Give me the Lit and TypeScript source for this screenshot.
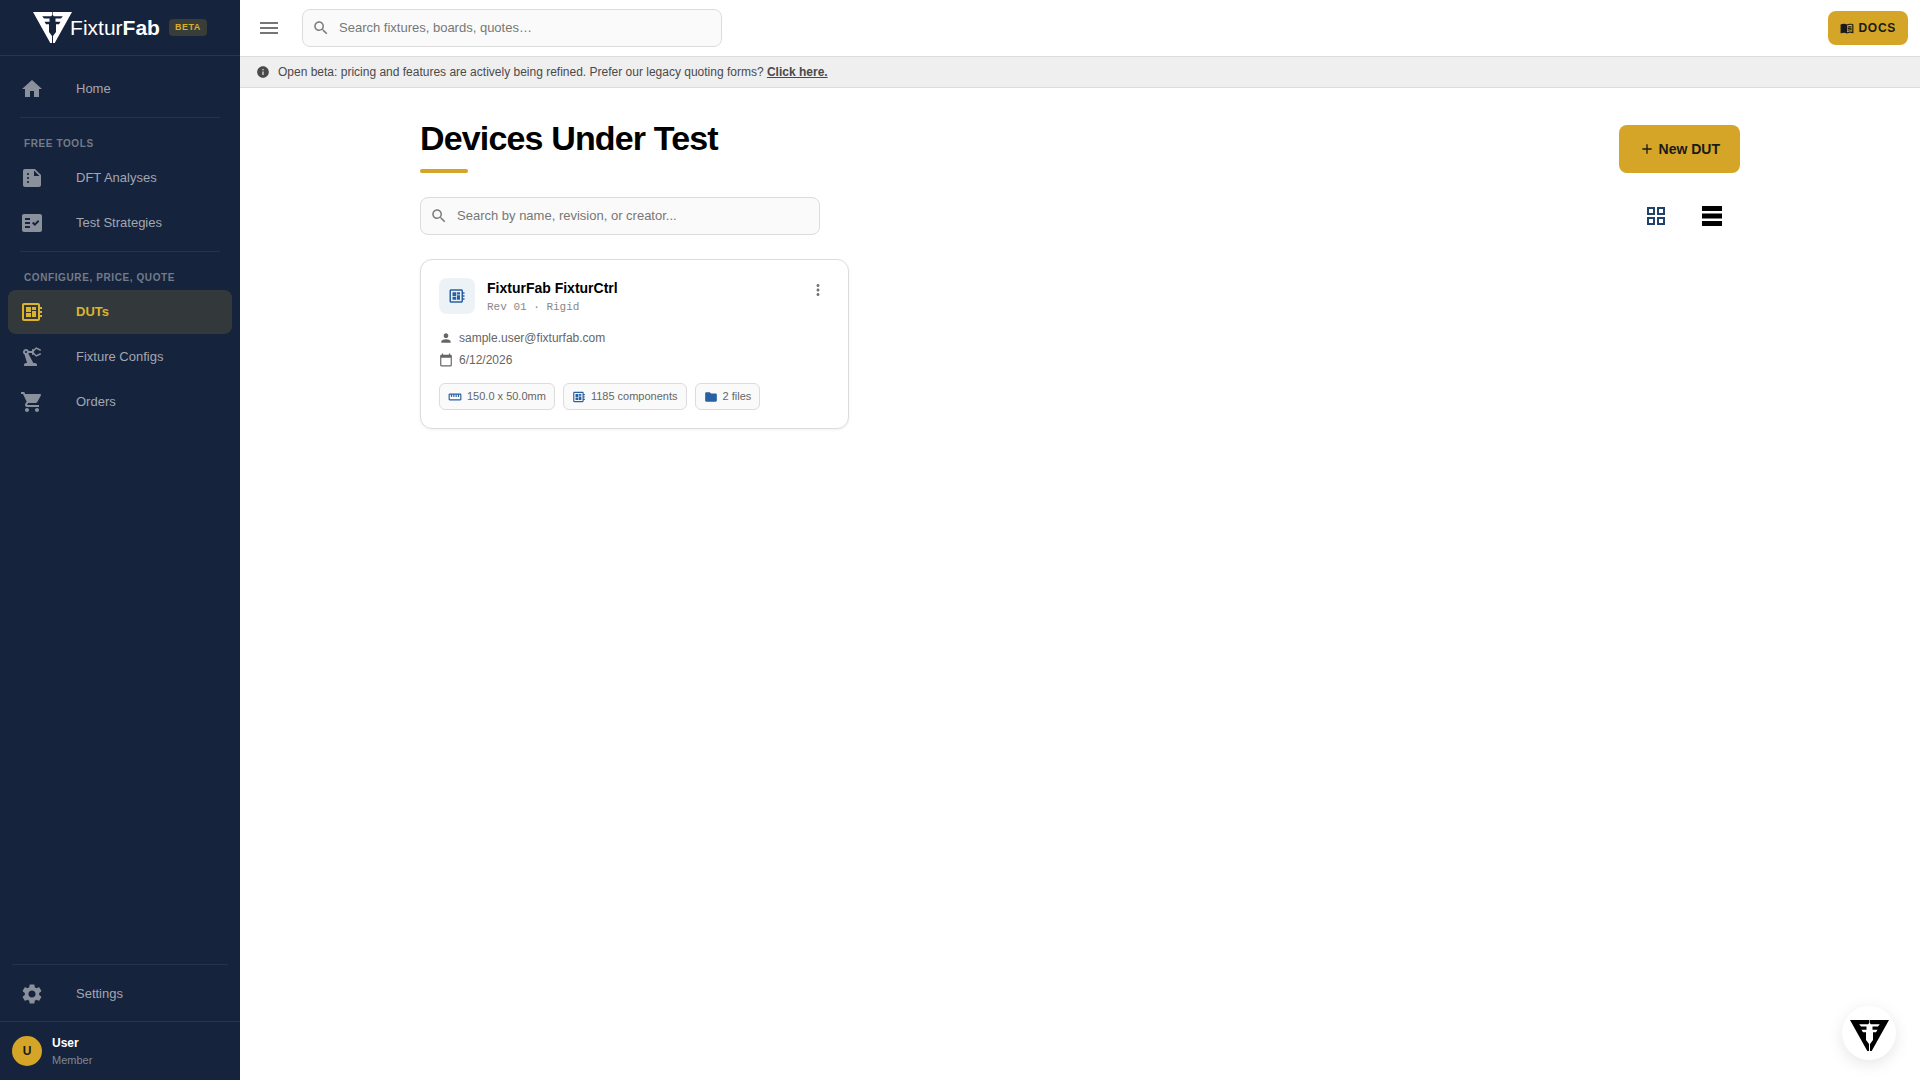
import { LitElement, html, css, svg, nothing } from "lit";
import { customElement, property } from "lit/decorators.js";

const ICONS: Record<string, string> = {
  home: "M10 20v-6h4v6h5v-8h3L12 3 2 12h3v8z",
  summarize:
    "M15 3H5c-1.1 0-1.99.9-1.99 2L3 19c0 1.1.89 2 1.99 2H19c1.1 0 2-.9 2-2V9l-6-6zM8 17c-.55 0-1-.45-1-1s.45-1 1-1 1 .45 1 1-.45 1-1 1zm0-4c-.55 0-1-.45-1-1s.45-1 1-1 1 .45 1 1-.45 1-1 1zm0-4c-.55 0-1-.45-1-1s.45-1 1-1 1 .45 1 1-.45 1-1 1zm6 1V4.5l5.5 5.5H14z",
  factCheck:
    "M20 3H4c-1.1 0-2 .9-2 2v14c0 1.1.9 2 2 2h16c1.1 0 2-.9 2-2V5c0-1.1-.9-2-2-2zM10 17H5v-2h5v2zm0-4H5v-2h5v2zm0-4H5V7h5v2zm4.82 6L12 12.16l1.41-1.41 1.41 1.42L17.99 9l1.42 1.42L14.82 15z",
  board:
    "M22 9V7h-2V5c0-1.1-.9-2-2-2H4c-1.1 0-2 .9-2 2v14c0 1.1.9 2 2 2h14c1.1 0 2-.9 2-2v-2h2v-2h-2v-2h2v-2h-2V9h2zm-4 10H4V5h14v14zM6 13h5v4H6zm6-6h4v3h-4zM6 7h5v5H6zm6 4h4v6h-4z",
  robotArm:
    "M19.93 8.35l-3.6 1.68L14 7.7V6.3l2.33-2.33 3.6 1.68c.38.18.82.01 1-.36.18-.38.01-.82-.36-1l-3.92-1.83c-.38-.18-.83-.1-1.13.2L13.78 4.4C13.6 4.16 13.32 4 13 4c-.55 0-1 .45-1 1v1H8.82C8.4 4.84 7.3 4 6 4 4.34 4 3 5.34 3 7c0 1.1.6 2.05 1.48 2.58L7.08 18H6c-1.1 0-2 .9-2 2v1h13v-1c0-1.1-.9-2-2-2h-1.62L8.41 8.77c.17-.24.31-.49.41-.77H12v1c0 .55.45 1 1 1 .32 0 .6-.16.78-.4l1.74 1.74c.3.3.75.38 1.13.2l3.92-1.83c.38-.18.54-.62.36-1-.18-.37-.62-.54-1-.36zM6 8c-.55 0-1-.45-1-1s.45-1 1-1 1 .45 1 1-.45 1-1 1z",
  cart: "M7 18c-1.1 0-1.99.9-1.99 2S5.9 22 7 22s2-.9 2-2-.9-2-2-2zM1 2v2h2l3.6 7.59-1.35 2.45c-.16.28-.25.61-.25.96 0 1.1.9 2 2 2h12v-2H7.42c-.14 0-.25-.11-.25-.25l.03-.12.9-1.63h7.45c.75 0 1.41-.41 1.75-1.03l3.58-6.49c.08-.14.12-.31.12-.48 0-.55-.45-1-1-1H5.21l-.94-2H1zm16 16c-1.1 0-1.99.9-1.99 2s.89 2 1.99 2 2-.9 2-2-.9-2-2-2z",
  settings:
    "M19.14 12.94c.04-.3.06-.61.06-.94 0-.32-.02-.64-.07-.94l2.03-1.58c.18-.14.23-.41.12-.61l-1.92-3.32c-.12-.22-.37-.29-.59-.22l-2.39.96c-.5-.38-1.03-.7-1.62-.94l-.36-2.54c-.04-.24-.24-.41-.48-.41h-3.84c-.24 0-.43.17-.47.41l-.36 2.54c-.59.24-1.13.57-1.62.94l-2.39-.96c-.22-.08-.47 0-.59.22L2.74 8.87c-.12.21-.08.47.12.61l2.03 1.58c-.05.3-.09.63-.09.94s.02.64.07.94l-2.03 1.58c-.18.14-.23.41-.12.61l1.92 3.32c.12.22.37.29.59.22l2.39-.96c.5.38 1.03.7 1.62.94l.36 2.54c.05.24.24.41.48.41h3.84c.24 0 .44-.17.47-.41l.36-2.54c.59-.24 1.13-.56 1.62-.94l2.39.96c.22.08.47 0 .59-.22l1.92-3.32c.12-.22.07-.47-.12-.61l-2.01-1.58zM12 15.6c-1.98 0-3.6-1.62-3.6-3.6s1.62-3.6 3.6-3.6 3.6 1.62 3.6 3.6-1.62 3.6-3.6 3.6z",
  menu: "M3 18h18v-2H3v2zm0-5h18v-2H3v2zm0-7v2h18V6H3z",
  search:
    "M15.5 14h-.79l-.28-.27C15.41 12.59 16 11.11 16 9.5 16 5.91 13.09 3 9.5 3S3 5.91 3 9.5 5.91 16 9.5 16c1.61 0 3.09-.59 4.23-1.57l.27.28v.79l5 4.99L20.49 19l-4.99-5zm-6 0C7.01 14 5 11.99 5 9.5S7.01 5 9.5 5 14 7.01 14 9.5 11.99 14 9.5 14z",
  info: "M12 2C6.48 2 2 6.48 2 12s4.48 10 10 10 10-4.48 10-10S17.52 2 12 2zm1 15h-2v-6h2v6zm0-8h-2V7h2v2z",
  book: "M21 5c-1.11-.35-2.33-.5-3.5-.5-1.95 0-4.05.4-5.5 1.5-1.45-1.1-3.55-1.5-5.5-1.5S2.45 4.9 1 6v14.65c0 .25.25.5.5.5.1 0 .15-.05.25-.05C3.1 20.45 5.05 20 6.5 20c1.95 0 4.05.4 5.5 1.5 1.35-.85 3.8-1.5 5.5-1.5 1.65 0 3.35.3 4.75 1.05.1.05.15.05.25.05.25 0 .5-.25.5-.5V6c-.6-.45-1.25-.75-2-1zm0 13.5c-1.1-.35-2.3-.5-3.5-.5-1.7 0-4.15.65-5.5 1.5V8c1.35-.85 3.8-1.5 5.5-1.5 1.2 0 2.4.15 3.5.5v11.5zM17.5 10.5c.88 0 1.73.09 2.5.26V9.24c-.79-.15-1.64-.24-2.5-.24-1.7 0-3.24.29-4.5.83v1.66c1.13-.64 2.7-.99 4.5-.99zM13 12.49v1.66c1.13-.64 2.7-.99 4.5-.99.88 0 1.73.09 2.5.26V11.9c-.79-.15-1.64-.24-2.5-.24-1.7 0-3.24.3-4.5.83zm4.5 1.84c-1.7 0-3.24.29-4.5.83v1.66c1.13-.64 2.7-.99 4.5-.99.88 0 1.73.09 2.5.26v-1.52c-.79-.16-1.64-.24-2.5-.24z",
  add: "M19 13h-6v6h-2v-6H5v-2h6V5h2v6h6v2z",
  grid: "M3 3v8h8V3H3zm6 6H5V5h4v4zm-6 4v8h8v-8H3zm6 6H5v-4h4v4zm4-16v8h8V3h-8zm6 6h-4V5h4v4zm-6 4v8h8v-8h-8zm6 6h-4v-4h4v4z",
  rows: "M2 2h20v5H2zM2 9.4h20v5.2H2zM2 17h20v5H2z",
  more: "M12 8c1.1 0 2-.9 2-2s-.9-2-2-2-2 .9-2 2 .9 2 2 2zm0 2c-1.1 0-2 .9-2 2s.9 2 2 2 2-.9 2-2-.9-2-2-2zm0 6c-1.1 0-2 .9-2 2s.9 2 2 2 2-.9 2-2-.9-2-2-2z",
  person:
    "M12 12c2.21 0 4-1.79 4-4s-1.79-4-4-4-4 1.79-4 4 1.79 4 4 4zm0 2c-2.67 0-8 1.34-8 4v2h16v-2c0-2.66-5.33-4-8-4z",
  calendar:
    "M20 3h-1V1h-2v2H7V1H5v2H4c-1.1 0-2 .9-2 2v16c0 1.1.9 2 2 2h16c1.1 0 2-.9 2-2V5c0-1.1-.9-2-2-2zm0 18H4V8h16v13z",
  ruler:
    "M21 6H3c-1.1 0-2 .9-2 2v8c0 1.1.9 2 2 2h18c1.1 0 2-.9 2-2V8c0-1.1-.9-2-2-2zm0 10H3V8h2v4h2V8h2v4h2V8h2v4h2V8h2v4h2V8h2v8z",
  folder: "M10 4H4c-1.1 0-1.99.9-1.99 2L2 18c0 1.1.9 2 2 2h16c1.1 0 2-.9 2-2V8c0-1.1-.9-2-2-2h-8l-2-2z",
};

const icon = (name: string, size = 24) => html`
  <svg width=${size} height=${size} viewBox="0 0 24 24" fill="currentColor" aria-hidden="true">
    ${svg`<path d=${ICONS[name]}></path>`}
  </svg>
`;

/* Two mirrored F shapes that together form an inverted triangle. */
const mark = () => html`
  <svg width="39" height="31" viewBox="0 0 39 31" fill="currentColor" aria-hidden="true">
    <path d="M0 0h19.200v3l-1 1.300H9.200L11 6.600h5.500V9.700h-5l1.500 2.600H16v7.700l3 4v7h-1.700z"></path>
    <path d="M39 0H19.800v3l1 1.300h9L28 6.600h-5.500V9.700h5l-1.500 2.600H23v7.700l-3 4v7h1.700z"></path>
  </svg>
`;

const reset = css`
  * {
    box-sizing: border-box;
  }
  svg {
    display: block;
    flex: none;
  }
  button,
  input {
    font: inherit;
    margin: 0;
  }
  button {
    display: flex;
    align-items: center;
    justify-content: center;
    padding: 0;
    border: 0;
    background: none;
    color: inherit;
    cursor: pointer;
  }
  a {
    color: inherit;
    text-decoration: none;
  }
`;

interface NavItem {
  label: string;
  icon: string;
  active?: boolean;
}

const SECTIONS: { title?: string; items: NavItem[] }[] = [
  { items: [{ label: "Home", icon: "home" }] },
  {
    title: "Free tools",
    items: [
      { label: "DFT Analyses", icon: "summarize" },
      { label: "Test Strategies", icon: "factCheck" },
    ],
  },
  {
    title: "Configure, price, quote",
    items: [
      { label: "DUTs", icon: "board", active: true },
      { label: "Fixture Configs", icon: "robotArm" },
      { label: "Orders", icon: "cart" },
    ],
  },
];

@customElement("ff-sidebar")
class FfSidebar extends LitElement {
  static styles = [
    reset,
    css`
      :host {
        display: flex;
        flex-direction: column;
        background: #16233c;
        color: #a2a7b1;
        font-size: 13px;
        line-height: 16px;
      }
      .brand {
        display: flex;
        align-items: center;
        justify-content: center;
        gap: 9px;
        height: 56px;
        border-bottom: 1px solid #2a364d;
      }
      .logo {
        display: flex;
        align-items: center;
        color: #fff;
        font-size: 21px;
        line-height: 31px;
      }
      .word {
        margin-left: -2px;
      }
      .beta {
        padding: 0 6px;
        border-radius: 4px;
        background: #383d3a;
        color: #d8b02b;
        font-size: 9px;
        font-weight: 700;
        line-height: 17px;
        letter-spacing: 0.06em;
      }
      nav {
        flex: 1;
        padding: 11px 8px;
      }
      ul {
        display: flex;
        flex-direction: column;
        gap: 1px;
        margin: 0;
        padding: 0;
        list-style: none;
      }
      .section {
        margin: 6px 12px 0;
        padding: 18px 4px 4px;
        border-top: 1px solid #26334a;
        color: #727b8a;
        font-size: 10px;
        font-weight: 700;
        line-height: 16px;
        letter-spacing: 0.06em;
        text-transform: uppercase;
      }
      .item {
        display: flex;
        align-items: center;
        gap: 32px;
        height: 44px;
        padding: 0 12px;
        border-radius: 8px;
      }
      .item svg {
        color: #8a919d;
      }
      .item.active,
      .item.active svg {
        color: #dcb42c;
      }
      .item.active {
        background: #33393b;
        font-weight: 700;
      }
      .foot {
        margin: 0 12px;
        padding: 7px 0 5px;
        border-top: 1px solid #26334a;
      }
      .foot .item {
        padding: 0 8px;
      }
      .user {
        display: flex;
        align-items: center;
        gap: 10px;
        padding: 0 12px;
        height: 59px;
        border-top: 1px solid #2a364d;
      }
      .avatar {
        width: 30px;
        border-radius: 50%;
        background: #d4a526;
        color: #1a1a1a;
        font-size: 12px;
        font-weight: 700;
        line-height: 30px;
        text-align: center;
      }
      .name {
        color: #fff;
        font-size: 12px;
        font-weight: 700;
        line-height: 18px;
      }
      .role {
        color: #7f8793;
        font-size: 11px;
      }
    `,
  ];

  private item(i: NavItem) {
    return html`<a
      class="item ${i.active ? "active" : ""}"
      href="#"
      aria-current=${i.active ? "page" : nothing}
      >${icon(i.icon)}<span>${i.label}</span></a
    >`;
  }

  render() {
    return html`
      <div class="brand">
        <a class="logo" href="#" aria-label="FixturFab">
          ${mark()}<span class="word">Fixtur<b>Fab</b></span>
        </a>
        <span class="beta">BETA</span>
      </div>
      <nav>
        ${SECTIONS.map(
          (s) => html`
            ${s.title ? html`<div class="section">${s.title}</div>` : nothing}
            <ul>
              ${s.items.map((i) => html`<li>${this.item(i)}</li>`)}
            </ul>
          `,
        )}
      </nav>
      <div class="foot">${this.item({ label: "Settings", icon: "settings" })}</div>
      <div class="user">
        <span class="avatar">U</span>
        <div>
          <div class="name">User</div>
          <div class="role">Member</div>
        </div>
      </div>
    `;
  }
}

@customElement("ff-search")
class FfSearch extends LitElement {
  @property() placeholder = "";

  static styles = [
    reset,
    css`
      :host {
        display: block;
      }
      label {
        display: flex;
        align-items: center;
        gap: 9px;
        height: 38px;
        padding: 0 9px;
        border: 1px solid #dcdcdc;
        border-radius: 8px;
        background: #fafafa;
        color: #7d7d7d;
      }
      input {
        flex: 1;
        min-width: 0;
        height: 16px;
        padding: 0;
        border: 0;
        outline: 0;
        background: none;
        color: #111;
        font-size: 13px;
        line-height: 16px;
      }
      input::placeholder {
        color: #777;
        opacity: 1;
      }
    `,
  ];

  render() {
    return html`<label>
      ${icon("search", 18)}
      <input type="text" aria-label=${this.placeholder} placeholder=${this.placeholder} />
    </label>`;
  }
}

interface Dut {
  name: string;
  detail: string;
  owner: string;
  date: string;
  chips: { icon: string; text: string }[];
}

const DUTS: Dut[] = [
  {
    name: "FixturFab FixturCtrl",
    detail: "Rev 01 · Rigid",
    owner: "sample.user@fixturfab.com",
    date: "6/12/2026",
    chips: [
      { icon: "ruler", text: "150.0 x 50.0mm" },
      { icon: "board", text: "1185 components" },
      { icon: "folder", text: "2 files" },
    ],
  },
];

@customElement("ff-dut-card")
class FfDutCard extends LitElement {
  @property({ attribute: false }) dut!: Dut;

  static styles = [
    reset,
    css`
      :host {
        display: block;
        padding: 18px;
        border: 1px solid #dcdcdc;
        border-radius: 12px;
        background: #fff;
        box-shadow: 0 1px 3px rgba(0, 0, 0, 0.06);
        color: #666;
      }
      header {
        display: flex;
        align-items: flex-start;
        gap: 12px;
        margin-bottom: 11px;
      }
      .tile {
        display: grid;
        place-items: center;
        width: 36px;
        height: 36px;
        border-radius: 8px;
        background: #edf2f7;
        color: #2860a4;
      }
      .head {
        flex: 1;
      }
      h2 {
        margin: 0;
        color: #000;
        font-size: 14px;
        line-height: 20px;
      }
      .detail {
        color: #888;
        font: 11px/18px "Liberation Mono", monospace;
      }
      .more {
        width: 24px;
        height: 24px;
        color: #757575;
      }
      .meta {
        display: flex;
        align-items: center;
        gap: 6px;
        font-size: 12px;
        line-height: 22px;
      }
      .chips {
        display: flex;
        flex-wrap: wrap;
        gap: 8px;
        margin-top: 12px;
      }
      .chip {
        display: flex;
        align-items: center;
        gap: 5px;
        padding: 0 8px;
        border: 1px solid #dcdcdc;
        border-radius: 6px;
        background: #fafafa;
        font-size: 11px;
        line-height: 25px;
      }
      .chip svg {
        color: #2860a4;
      }
    `,
  ];

  render() {
    const d = this.dut;
    return html`
      <header>
        <span class="tile">${icon("board", 18)}</span>
        <div class="head">
          <h2>${d.name}</h2>
          <div class="detail">${d.detail}</div>
        </div>
        <button class="more" aria-label="More actions">${icon("more", 18)}</button>
      </header>
      <div class="meta">${icon("person", 14)}<span>${d.owner}</span></div>
      <div class="meta">${icon("calendar", 14)}<span>${d.date}</span></div>
      <div class="chips">
        ${d.chips.map((c) => html`<span class="chip">${icon(c.icon, 14)}<span>${c.text}</span></span>`)}
      </div>
    `;
  }
}

@customElement("app-root")
class AppRoot extends LitElement {
  static styles = [
    reset,
    css`
      :host {
        display: grid;
        grid-template-columns: 240px 1fr;
        min-height: 100vh;
        background: #fff;
        color: #000;
        font-family: "Liberation Sans", Arial, sans-serif;
        font-size: 13px;
      }
      .topbar {
        display: flex;
        align-items: center;
        gap: 13px;
        height: 57px;
        padding: 0 12px 0 9px;
        border-bottom: 1px solid #dcdcdc;
      }
      .toggle {
        width: 40px;
        height: 40px;
        color: #757575;
      }
      .topbar ff-search {
        flex: 0 1 420px;
      }
      .gold {
        display: flex;
        align-items: center;
        gap: 4px;
        border-radius: 8px;
        background: #d4a526;
        color: #1a1a1a;
        font-weight: 700;
      }
      .docs {
        height: 34px;
        margin-left: auto;
        padding: 0 12px;
        font-size: 12px;
        letter-spacing: 0.06em;
      }
      .banner {
        display: flex;
        align-items: center;
        gap: 8px;
        padding: 0 16px;
        border-bottom: 1px solid #dcdcdc;
        background: #efefef;
        color: #4a4a4a;
        font-size: 12px;
        line-height: 30px;
      }
      .banner a {
        font-weight: 700;
        text-decoration: underline;
      }
      main {
        max-width: 1368px;
        margin: 0 auto;
        padding: 32px 24px;
      }
      .row {
        display: flex;
        align-items: center;
        justify-content: space-between;
      }
      .title {
        align-items: flex-end;
        margin-bottom: 24px;
      }
      h1 {
        margin: 0;
        font-size: 34px;
        line-height: 36px;
        letter-spacing: -0.025em;
      }
      h1::after {
        content: "";
        display: block;
        width: 48px;
        height: 4px;
        margin-top: 13px;
        border-radius: 2px;
        background: #d4a526;
      }
      .new {
        height: 48px;
        padding: 0 20px;
        font-size: 14px;
      }
      .tools {
        margin-bottom: 24px;
      }
      .tools ff-search {
        flex: 0 1 400px;
      }
      .views {
        display: flex;
      }
      .views button {
        width: 56px;
        height: 38px;
      }
      .views .on {
        color: #21426b;
      }
      .cards {
        display: grid;
        grid-template-columns: repeat(3, 1fr);
        gap: 16px;
      }
      .fab {
        position: fixed;
        right: 24px;
        bottom: 20px;
        width: 54px;
        height: 54px;
        padding-top: 4px;
        border-radius: 50%;
        background: #fff;
        box-shadow: 0 4px 16px rgba(0, 0, 0, 0.1);
      }
    `,
  ];

  render() {
    return html`
      <ff-sidebar></ff-sidebar>
      <div>
        <div class="topbar">
          <button class="toggle" aria-label="Toggle sidebar">${icon("menu")}</button>
          <ff-search placeholder="Search fixtures, boards, quotes…"></ff-search>
          <a class="gold docs" href="#">${icon("book", 14)}<span>DOCS</span></a>
        </div>
        <div class="banner">
          ${icon("info", 14)}
          <span
            >Open beta: pricing and features are actively being refined. Prefer our legacy quoting
            forms? <a href="#">Click here.</a></span
          >
        </div>
        <main>
          <div class="row title">
            <h1>Devices Under Test</h1>
            <button class="gold new">${icon("add", 16)}<span>New DUT</span></button>
          </div>
          <div class="row tools">
            <ff-search placeholder="Search by name, revision, or creator..."></ff-search>
            <div class="views">
              <button class="on" aria-label="Grid view" aria-pressed="true">${icon("grid")}</button>
              <button aria-label="List view" aria-pressed="false">${icon("rows")}</button>
            </div>
          </div>
          <div class="cards">
            ${DUTS.map((d) => html`<ff-dut-card .dut=${d}></ff-dut-card>`)}
          </div>
        </main>
      </div>
      <button class="fab" aria-label="Open assistant">${mark()}</button>
    `;
  }
}
